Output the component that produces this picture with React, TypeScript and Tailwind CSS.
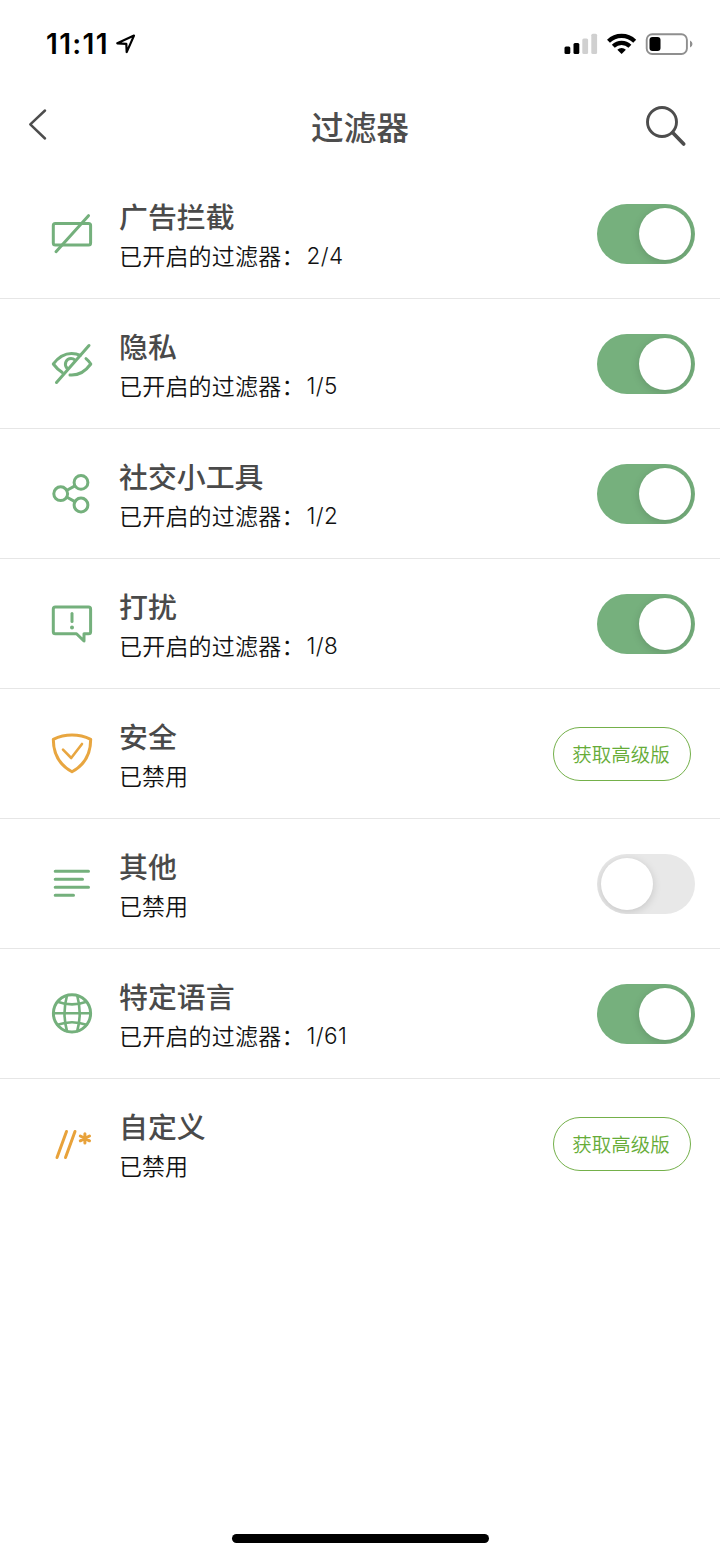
import { useState, type ReactNode } from 'react';

interface Filter {
  id: string;
  title: string;
  count?: string;
  icon: ReactNode;
  premium?: boolean;
  enabled?: boolean;
}

const filters: Filter[] = [
  { id: 'ads', title: '广告拦截', count: '2/4', icon: <AdIcon />, enabled: true },
  { id: 'privacy', title: '隐私', count: '1/5', icon: <PrivacyIcon />, enabled: true },
  { id: 'social', title: '社交小工具', count: '1/2', icon: <SocialIcon />, enabled: true },
  { id: 'annoyances', title: '打扰', count: '1/8', icon: <AnnoyanceIcon />, enabled: true },
  { id: 'security', title: '安全', icon: <SecurityIcon />, premium: true },
  { id: 'other', title: '其他', icon: <OtherIcon />, enabled: false },
  { id: 'language', title: '特定语言', count: '1/61', icon: <LanguageIcon />, enabled: true },
  { id: 'custom', title: '自定义', icon: <CustomIcon />, premium: true },
];

function IconBase({ children, color = 'text-[#74b07c]' }: { children: ReactNode; color?: string }) {
  return (
    <svg
      viewBox="0 0 48 48"
      className={`w-12 h-12 shrink-0 ${color}`}
      fill="none"
      stroke="currentColor"
      strokeWidth="3"
      strokeLinecap="round"
      strokeLinejoin="round"
    >
      {children}
    </svg>
  );
}

function AdIcon() {
  return (
    <IconBase>
      <rect x="5.3" y="13.4" width="37.3" height="21.6" rx="2" />
      <path d="M8 41.7L40.5 5.7" />
    </IconBase>
  );
}

function PrivacyIcon() {
  return (
    <IconBase>
      <path d="M14.2 32.4C11 30.5 8 27.6 5.3 24C10.5 17.3 16.5 13.6 23.5 13.6C26.8 13.6 29.8 14.2 32.5 15.3" />
      <path d="M38 18.6C39.8 20 41.3 21.8 42.8 24C37.5 31.2 31 35.2 23.5 35.1L22 35" />
      <path d="M18.8 28C15.6 23.6 18.5 18.6 23 18.6C24.5 18.6 25.8 19 26.8 19.8" />
      <path d="M8.5 42.5L41 5.5" />
    </IconBase>
  );
}

function SocialIcon() {
  return (
    <IconBase>
      <circle cx="12.7" cy="23.7" r="6.9" />
      <circle cx="33" cy="12.4" r="6.9" />
      <circle cx="33" cy="35" r="6.9" />
      <path d="M19 20.2L26.9 15.9M19 27.2L26.9 31.6" />
    </IconBase>
  );
}

function AnnoyanceIcon() {
  return (
    <IconBase>
      <path d="M7.3 7H40.6Q42.6 7 42.6 9V31.7Q42.6 33.7 40.6 33.7H36V41L28.5 33.7H7.3Q5.3 33.7 5.3 31.7V9Q5.3 7 7.3 7Z" />
      <path d="M24 13.5V21.5" />
      <circle cx="24" cy="27.5" r="2" fill="currentColor" stroke="none" />
    </IconBase>
  );
}

function SecurityIcon() {
  return (
    <IconBase color="text-[#e8a640]">
      <path d="M24 5C17.5 5 11.3 6.4 5.3 9.3C5.3 24 10.5 34.5 24 41.7C37.5 34.5 42.7 24 42.7 9.3C36.7 6.4 30.5 5 24 5Z" />
      <path d="M15 19.7L23.2 28L34 14" strokeWidth="2.6" />
    </IconBase>
  );
}

function OtherIcon() {
  return (
    <IconBase>
      <path d="M7.2 11.3H40.5M7.2 19.3H34.5M7.2 27.3H40.5M7.2 35.3H25.5" />
    </IconBase>
  );
}

function LanguageIcon() {
  return (
    <IconBase>
      <circle cx="24" cy="23.3" r="18.6" />
      <path d="M5.3 23.3H42.7M9.5 11.8Q24 17 38.5 11.8M9.5 34.8Q24 29.6 38.5 34.8" strokeWidth="2.6" />
      <path d="M19 5.5Q14 23.3 19 41.1M29.2 5.5Q34.2 23.3 29.2 41.1" strokeWidth="2.6" />
    </IconBase>
  );
}

function CustomIcon() {
  return (
    <IconBase color="text-[#e8a23a]">
      <path d="M9 37.5L18.5 11.5M17.5 37.5L27 11.5" />
      <path d="M36.9 13.8V23M32.3 16L41.5 20.8M41.5 16L32.3 20.8" />
    </IconBase>
  );
}

function StatusBar() {
  return (
    <div className="flex h-[88px] items-center justify-between pl-[46px] pr-[27px] text-black">
      <div className="flex items-center gap-[7px]">
        <span className="font-['Inter'] text-[28px] font-semibold leading-none tracking-[1.3px]">11:11</span>
        <svg viewBox="0 0 20 20" className="w-5 h-5" fill="none" stroke="currentColor" strokeWidth="2.2" strokeLinejoin="round">
          <path d="M1.3 9.3L18 1.6L10.7 18.1L10.3 9.8Z" />
        </svg>
      </div>
      <div className="flex items-center">
        <svg viewBox="0 0 34 22" className="mr-[9px] w-[34px] h-[22px]" fill="currentColor">
          <rect x="0.5" y="13.5" width="5.8" height="7.5" rx="1.5" />
          <rect x="9.5" y="10" width="5.8" height="11" rx="1.5" />
          <rect x="18.3" y="5.5" width="5.8" height="15.5" rx="1.5" fill="#d0d0d0" />
          <rect x="27.3" y="0.7" width="5.8" height="20.3" rx="1.5" fill="#d0d0d0" />
        </svg>
        <svg viewBox="0 0 30 22" className="mr-[8px] w-[30px] h-[22px]" fill="none" stroke="currentColor" strokeWidth="4.2">
          <path d="M1.5 8.2A18.8 18.8 0 0 1 27.7 8.2" />
          <path d="M6.3 13.3A12 12 0 0 1 22.9 13.3" />
          <path d="M14.6 20.9L10.3 16.7A6.3 6.3 0 0 1 18.9 16.7Z" fill="currentColor" stroke="none" />
        </svg>
        <svg viewBox="0 0 48 22" className="w-[48px] h-[22px]">
          <rect x="1.7" y="1.2" width="40.2" height="19.8" rx="5.5" fill="none" stroke="#8f8f8f" strokeWidth="1.9" />
          <rect x="4.5" y="4" width="11" height="14" rx="3" fill="#000" />
          <path d="M45 7.5Q47.5 8.5 47.5 11T45 14.5Z" fill="#8f8f8f" />
        </svg>
      </div>
    </div>
  );
}

function NavBar() {
  return (
    <header className="flex h-[81px] items-start justify-between px-6 pt-[14px] text-[#4d4d4d]">
      <button className="w-12 h-12" aria-label="返回">
        <svg viewBox="0 0 48 48" className="w-12 h-12" fill="none" stroke="currentColor" strokeWidth="2.5" strokeLinecap="round" strokeLinejoin="round">
          <path d="M21 8.5L6.3 22.4L21 36.5" />
        </svg>
      </button>
      <h1 className="text-[32.7px] font-medium leading-[48px]">过滤器</h1>
      <button className="w-12 h-12" aria-label="搜索">
        <svg viewBox="0 0 48 48" className="w-12 h-12 overflow-visible" fill="none" stroke="currentColor" strokeLinecap="round">
          <circle cx="14" cy="20" r="14.5" strokeWidth="2.9" />
          <path d="M24.8 30.8L35.7 42" strokeWidth="3.7" />
        </svg>
      </button>
    </header>
  );
}

function Toggle({ on, onChange }: { on: boolean; onChange: () => void }) {
  return (
    <button
      role="switch"
      aria-checked={on}
      onClick={onChange}
      className={`mr-[25px] flex h-[60px] w-[98px] items-center overflow-hidden rounded-full px-1 ${
        on ? 'justify-end bg-[#76b07d]' : 'justify-start bg-[#e8e8e8]'
      }`}
    >
      <span className="h-[52px] w-[52px] rounded-full bg-white shadow-[0_2px_8px_rgba(0,0,0,0.15)]" />
    </button>
  );
}

function FilterRow({ filter, last }: { filter: Filter; last: boolean }) {
  const [on, setOn] = useState(Boolean(filter.enabled));

  return (
    <li className={`flex h-[130px] items-center border-b pl-12 ${last ? 'border-transparent' : 'border-[#e6e6e6]'}`}>
      {filter.icon}
      <div className="ml-[23px] flex-1 pt-[3px]">
        <div className="text-[28.9px] font-medium leading-10 text-[#4a4a4a]">{filter.title}</div>
        <div className="flex text-[23px] font-[350] leading-10 text-[#111]">
          {filter.count ? (
            <>
              <span className="tracking-[0.2px]">已开启的过滤器：</span>
              <span className="ml-[2px] pt-px font-['Inter'] text-[22.5px] tracking-[0.4px]">{filter.count}</span>
            </>
          ) : (
            <span>已禁用</span>
          )}
        </div>
      </div>
      {filter.premium ? (
        <button className="mr-[29px] h-[54px] w-[138px] rounded-full border border-[#74b04a] pr-0.5 text-[19.5px] font-[350] text-[#66ac38]">
          获取高级版
        </button>
      ) : (
        <Toggle on={on} onChange={() => setOn(!on)} />
      )}
    </li>
  );
}

export default function App() {
  return (
    <div className="flex h-[1559px] w-[720px] flex-col bg-white font-['Noto_Sans_CJK_SC',sans-serif]">
      <StatusBar />
      <NavBar />
      <ul className="flex-1">
        {filters.map((filter, i) => (
          <FilterRow key={filter.id} filter={filter} last={i === filters.length - 1} />
        ))}
      </ul>
      {/* Home indicator */}
      <div className="mb-4 ml-[232px] h-[9px] w-[257px] rounded-full bg-black" />
    </div>
  );
}
